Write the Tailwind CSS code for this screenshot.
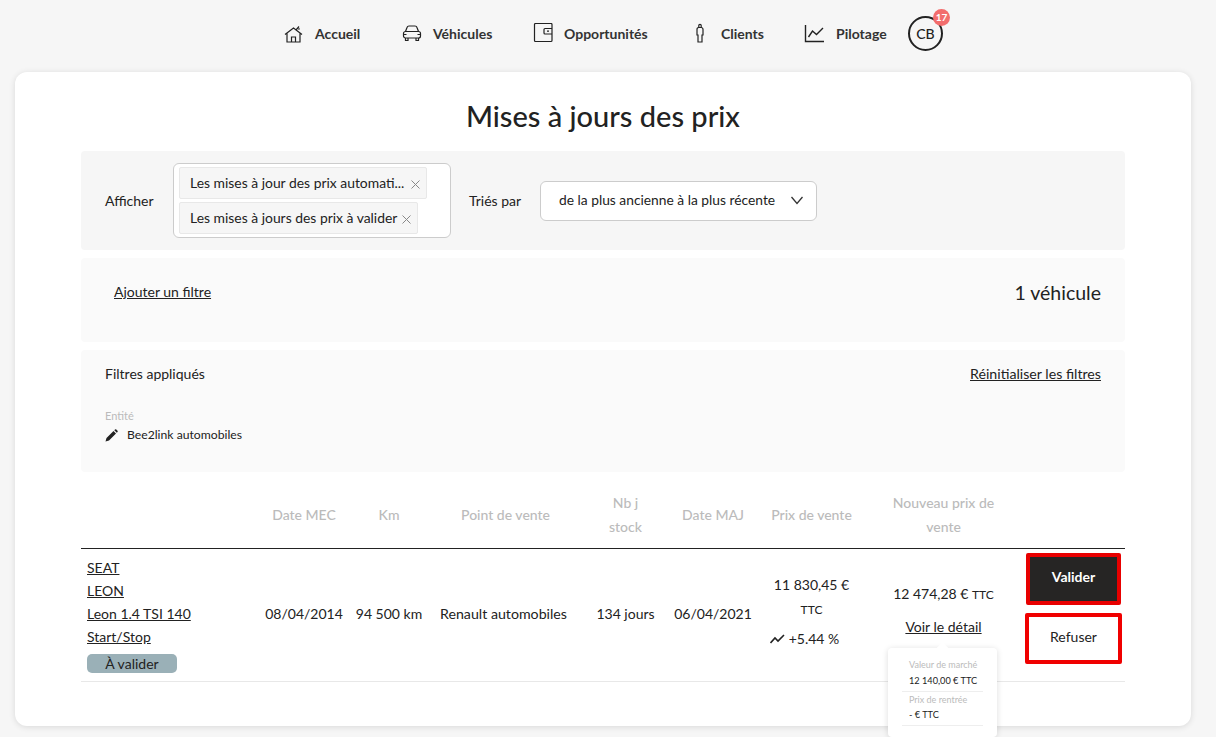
<!DOCTYPE html>
<html lang="fr">
<head>
    <meta charset="UTF-8">
    <title>Mises à jours des prix</title>
    <script src="https://cdn.jsdelivr.net/npm/@tailwindcss/browser@4"></script>
</head>
<body class="bg-[#f6f6f6] font-['Lato','Liberation_Sans',sans-serif] text-[#222] h-[737px] overflow-hidden">

    <!-- Nav -->
    <nav class="h-[72px] flex items-center pl-[283px] pb-[6px] text-[14px] font-bold text-[#333]">
        <a class="flex items-center gap-[11px] w-[119px]">
            <svg class="w-[21px] h-[21px]" viewBox="0 0 21 21" fill="none" stroke="#222" stroke-width="1.2"><path d="M2 11.500 10.500 5 19 11.500M4 10V19H17V10M8.500 19v-5h4v5M13 7l3-3.500M15.500 6.500l1-1"/></svg>
            <span>Accueil</span>
        </a>
        <a class="flex items-center gap-[11px] w-[131px]">
            <svg class="w-[20px] h-[20px]" viewBox="0 0 20 20" fill="none" stroke="#222" stroke-width="1.2"><path d="M3.500 8.500 5 4.500Q5.500 3 7 3h6q1.500 0 2 1.500l1.500 4"/><rect x="1.500" y="8.500" width="17" height="6.500" rx="2"/><path d="M3.500 15v2.500h2.500V15M14 15v2.500h2.500V15M1.500 11.500h3M15.500 11.500h3"/></svg>
            <span>Véhicules</span>
        </a>
        <a class="flex items-center gap-[11px] w-[157px]">
            <svg class="w-[20px] h-[20px]" viewBox="0 0 20 20" fill="none" stroke="#222" stroke-width="1.2"><rect x="1.500" y="0.500" width="17.500" height="18" rx="1"/><path d="M19 5.500h-7a1 1 0 0 0-1 1v3.500a1 1 0 0 0 1 1h7M14 8.200h2"/></svg>
            <span>Opportunités</span>
        </a>
        <a class="flex items-center gap-[11px] w-[114px]">
            <svg class="w-[20px] h-[20px]" viewBox="0 0 20 20" fill="none" stroke="#222" stroke-width="1.2"><path d="M8.800 4.500V2.500a1.200 1.200 0 0 1 2.400 0v2z"/><path d="M7 6.500q0-2 2-2h2q2 0 2 2v5.500h-1v7H8v-7H7z"/></svg>
            <span>Clients</span>
        </a>
        <a class="flex items-center gap-[11px] w-[104px]">
            <svg class="w-[21px] h-[21px]" viewBox="0 0 21 21" fill="none" stroke="#222" stroke-width="1.4"><path d="M1.500 2v16.500H20M4.500 14 8.500 8l4 3.500L19 5"/></svg>
            <span>Pilotage</span>
        </a>
        <div class="relative w-[35px] h-[35px] rounded-full border-2 border-[#222] flex items-center justify-center text-[14px] text-[#222] font-medium">
            CB
            <span class="absolute -top-[9px] -right-[9px] w-[17px] h-[17px] rounded-full bg-[#f26d6d] text-white text-[10px] font-bold flex items-center justify-center">17</span>
        </div>
    </nav>

    <!-- Card -->
    <main class="relative ml-[15px] mr-[25px] h-[654px] bg-white rounded-[12px] shadow-[0_1px_6px_rgba(0,0,0,0.12)] px-[66px]">
        <h1 class="h-[79px] flex items-center justify-center text-[29px] font-medium text-[#222] pt-[8px]">Mises à jours des prix</h1>

        <!-- Display options -->
        <section class="h-[99px] bg-[#f6f6f6] rounded-[4px] flex items-center pl-[24px] text-[14px]">
            <span class="w-[68px]">Afficher</span>
            <div class="w-[278px] h-[75px] bg-white border border-[#ccc] rounded-[6px] px-[5px] py-[3px] flex flex-col items-start gap-[3px]">
                <span class="h-[32px] w-[248px] bg-[#f6f6f6] border border-[#e8e8e8] rounded-[2px] pl-[10px] flex items-center gap-[5px] whitespace-nowrap text-[13.900px]">Les mises à jour des prix automati...
                    <svg class="w-[9px] h-[9px] mt-[2px] ml-[2px]" viewBox="0 0 9 9" fill="none" stroke="#888" stroke-width="1"><path d="M.5.5l8 8M8.500.5l-8 8"/></svg></span>
                <span class="h-[32px] w-[239px] bg-[#f6f6f6] border border-[#e8e8e8] rounded-[2px] pl-[10px] flex items-center gap-[5px] whitespace-nowrap text-[13.900px]">Les mises à jours des prix à valider
                    <svg class="w-[9px] h-[9px] mt-[2px]" viewBox="0 0 9 9" fill="none" stroke="#888" stroke-width="1"><path d="M.5.5l8 8M8.500.5l-8 8"/></svg></span>
            </div>
            <span class="ml-[18px] w-[71px]">Triés par</span>
            <div class="w-[277px] h-[40px] bg-white border border-[#ccc] rounded-[6px] pl-[18px] pr-[12px] flex items-center justify-between">
                <span class="text-[13.800px]">de la plus ancienne à la plus récente</span>
                <svg class="w-[14px] h-[9px]" viewBox="0 0 14 9" fill="none" stroke="#333" stroke-width="1.300"><path d="M1.500 1 7 7.500 12.500 1"/></svg>
            </div>
        </section>

        <!-- Filter bar -->
        <section class="mt-[8px] h-[84px] bg-[#fafafa] rounded-[4px] flex justify-between pl-[33px] pr-[24px] pt-[24px]">
            <a class="underline text-[14px] leading-[20px]">Ajouter un filtre</a>
            <span class="text-[19.500px] leading-[22px]">1 véhicule</span>
        </section>

        <!-- Applied filters -->
        <section class="mt-[8px] h-[122px] bg-[#fafafa] rounded-[4px] px-[24px] pt-[14px]">
            <div class="flex justify-between text-[14px] leading-[20px]">
                <span>Filtres appliqués</span>
                <a class="underline text-[14.200px]">Réinitialiser les filtres</a>
            </div>
            <div class="mt-[24px] text-[11px] leading-[16px] text-[#bbb]">Entité</div>
            <div class="mt-[3px] flex items-center gap-[9px] text-[12.200px] leading-[16px]">
                <svg class="w-[13px] h-[13px]" viewBox="0 0 13 13" fill="#222"><path d="M0.500 12.500 1.500 9 8.500 2 11 4.500 4 11.500zM9.300 1.200 10 .5a1 1 0 0 1 1.300 0l1.200 1.200a1 1 0 0 1 0 1.300l-.7.700z"/></svg>
                <span>Bee2link automobiles</span>
            </div>
        </section>

        <!-- Table head -->
        <div class="mt-[18px] h-[59px] pb-[8px] grid grid-cols-[177px_92px_78px_155px_85px_90px_107px_157px_103px] items-center text-center text-[14px] leading-[24px] text-[#bbb] font-medium border-b border-[#222]">
            <span></span>
            <span>Date MEC</span>
            <span>Km</span>
            <span>Point de vente</span>
            <span class="px-[20px]">Nb j stock</span>
            <span>Date MAJ</span>
            <span>Prix de vente</span>
            <span class="px-[20px]">Nouveau prix de vente</span>
            <span></span>
        </div>

        <!-- Row -->
        <div class="h-[133px] pb-[3px] grid grid-cols-[177px_92px_78px_155px_85px_90px_107px_157px_103px] items-center text-center text-[14px] border-b border-[#e8e8e8]">
            <div class="text-left pl-[6px] pt-[2px] leading-[23px]">
                <a class="block underline">SEAT</a>
                <a class="block underline">LEON</a>
                <a class="block underline">Leon 1.4 TSI 140</a>
                <a class="block underline">Start/Stop</a>
                <span class="block mt-[6px] w-[90px] h-[19px] leading-[19px] rounded-[5px] bg-[#9ab0b7] text-center">À valider</span>
            </div>
            <span>08/04/2014</span>
            <span>94 500 km</span>
            <span class="pr-[4px] text-[14.200px]">Renault automobiles</span>
            <span>134 jours</span>
            <span>06/04/2021</span>
            <div class="leading-[26px] pb-[4px]">
                <div>11 830,45 €</div>
                <div class="text-[12px] leading-[24px]">TTC</div>
                <div class="mt-[4px] pr-[14px] flex items-center justify-center gap-[4px]">
                    <svg class="w-[15px] h-[10px]" viewBox="0 0 15 10" fill="none" stroke="#222" stroke-width="1.600"><path d="M.5 9 5 4l3 3 6-6"/></svg>
                    <span>+5.44 %</span>
                </div>
            </div>
            <div class="relative pb-[10px]">
                <div class="leading-[26px]">12 474,28 € <span class="text-[12px]">TTC</span></div>
                <a class="block mt-[9px] underline leading-[20px]">Voir le détail</a>
                <!-- Tooltip -->
                <div class="absolute left-[23px] top-[67px] w-[109px] h-[89px] bg-white rounded-[4px] shadow-[0_1px_6px_rgba(0,0,0,0.14)] px-[14px] pt-[10px] text-left whitespace-nowrap">
                    <div class="absolute -top-[4px] left-[50px] w-[9px] h-[9px] bg-white rotate-45"></div>
                    <div class="relative px-[7px] text-[9px] leading-[14px] text-[#bbb]">Valeur de marché</div>
                    <div class="px-[7px] pb-[3px] mt-[2px] text-[9.200px] leading-[14px] border-b border-[#eee]">12 140,00 € TTC</div>
                    <div class="px-[7px] mt-[1px] text-[9px] leading-[14px] text-[#bbb]">Prix de rentrée</div>
                    <div class="px-[7px] pb-[3px] mt-[1px] text-[9.200px] leading-[14px] border-b border-[#eee]">- € TTC</div>
                </div>
            </div>
            <div class="flex flex-col items-center gap-[8px] mb-[11px]">
                <button class="w-[95px] h-[52px] pb-[4px] bg-[#262524] border-[4px] border-[#e80000] rounded-[2px] text-white text-[14px] font-bold">Valider</button>
                <button class="w-[97px] h-[51px] pb-[3px] bg-white border-[4px] border-[#f00000] rounded-[2px] text-[14px]">Refuser</button>
            </div>
        </div>
    </main>
</body>
</html>
